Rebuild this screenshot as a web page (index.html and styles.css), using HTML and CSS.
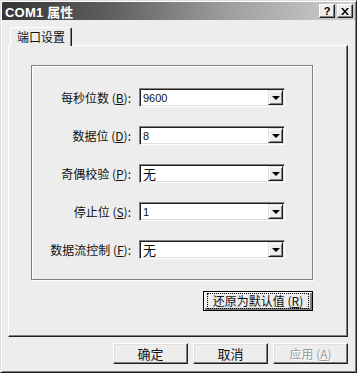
FILE: index.html
```html
<!DOCTYPE html>
<html lang="zh-CN">
<head>
  <meta charset="UTF-8" />
  <title>COM1 属性</title>
  <link rel="stylesheet" href="styles.css">
</head>
<body>

  <div class="window">
    <div class="titlebar">
      <span class="title">COM1 属性</span>
      <div class="caption-btns">
        <span class="cap-btn">?</span>
        <span class="cap-btn close">
          <svg width="8" height="7" viewBox="0 0 8 7"><path d="M0 0h2l2 2.5 2-2.5h2l-3 3.5 3 3.5h-2l-2-2.5-2 2.5h-2l3-3.5z" fill="#000"/></svg>
        </span>
      </div>
    </div>

    <div class="content">
      <div class="tabs">
        <div class="tab active">端口设置</div>
      </div>

      <div class="panel">
        <div class="group">
          <div class="row">
            <label>每秒位数 (<u>B</u>):</label>
            <div class="select"><span class="value">9600</span><span class="drop"></span></div>
          </div>
          <div class="row">
            <label>数据位 (<u>D</u>):</label>
            <div class="select"><span class="value">8</span><span class="drop"></span></div>
          </div>
          <div class="row">
            <label>奇偶校验 (<u>P</u>):</label>
            <div class="select"><span class="value cjk">无</span><span class="drop"></span></div>
          </div>
          <div class="row">
            <label>停止位 (<u>S</u>):</label>
            <div class="select"><span class="value">1</span><span class="drop"></span></div>
          </div>
          <div class="row">
            <label>数据流控制 (<u>F</u>):</label>
            <div class="select"><span class="value cjk">无</span><span class="drop"></span></div>
          </div>
        </div>

        <div class="panel-actions">
          <button class="btn default"><span class="focus">还原为默认值 (<u>R</u>)</span></button>
        </div>
      </div>

      <div class="footer">
        <button class="btn">确定</button>
        <button class="btn">取消</button>
        <button class="btn disabled">应用 (<u>A</u>)</button>
      </div>
    </div>
  </div>

</body>
</html>
```

FILE: styles.css
```css
:root {
  --face: #ededed;
  --light: #ffffff;
  --mid: #dfdfdf;
  --shadow: #808080;
  --dark: #202020;
}

body {
  margin: 0;
  background: var(--face);
  font-family: "Noto Sans CJK SC", "Liberation Sans", sans-serif;
  font-size: 12px;
  color: #111;
}

.window {
  width: 357px;
  height: 373px;
  box-sizing: border-box;
  padding: 1px;
  border: 1px solid;
  border-color: var(--mid) var(--dark) var(--dark) var(--mid);
  box-shadow: inset 1px 1px var(--light), inset -1px -1px var(--shadow);
  background: var(--face);
  display: flex;
  flex-direction: column;
}

.titlebar {
  height: 18px;
  display: flex;
  align-items: center;
  justify-content: space-between;
  padding: 0 2px 0 3px;
  background: linear-gradient(to right, #353535 0%, #5e5e5e 30%, #a0a0a0 65%, #cfcfcf 100%);
}

.title {
  color: #fff;
  font-family: "Liberation Sans", "Noto Sans CJK SC", sans-serif;
  font-weight: bold;
  font-size: 13px;
  letter-spacing: 0.2px;
}

.caption-btns {
  display: flex;
  gap: 2px;
}

.cap-btn {
  width: 14px;
  height: 12px;
  display: flex;
  align-items: center;
  justify-content: center;
  background: var(--face);
  border: 1px solid;
  border-color: var(--light) var(--dark) var(--dark) var(--light);
  box-shadow: inset -1px -1px var(--shadow);
  font-family: "Liberation Sans", sans-serif;
  font-weight: bold;
  font-size: 11px;
  line-height: 1;
  color: #000;
}

.content {
  flex: 1;
  padding: 0 7px 0 6px;
}

.tabs {
  display: flex;
  margin-top: 7px;
  padding-left: 2px;
}

.tab {
  position: relative;
  z-index: 1;
  width: 62px;
  height: 19px;
  margin-bottom: -1px;
  box-sizing: border-box;
  padding-top: 1px;
  border: 1px solid;
  border-bottom: none;
  border-color: var(--light) var(--dark) transparent var(--light);
  box-shadow: inset -1px 0 var(--shadow);
  border-radius: 2px 2px 0 0;
  background: var(--face);
  text-align: center;
  font-size: 12px;
  line-height: 16px;
}

.panel {
  box-sizing: border-box;
  height: 292px;
  padding: 19px 34px 25px 22px;
  border: 1px solid;
  border-color: var(--light) var(--dark) var(--dark) var(--light);
  box-shadow: inset -1px -1px var(--shadow);
}

.group {
  box-sizing: border-box;
  height: 215px;
  padding: 22px 0 20px 0;
  border: 1px solid var(--shadow);
  box-shadow: inset 1px 1px var(--light), 1px 1px var(--light);
  display: flex;
  flex-direction: column;
  gap: 19px;
}

.row {
  display: flex;
  align-items: center;
  height: 19px;
}

.row label {
  width: 99px;
  margin-right: 8px;
  text-align: right;
  font-size: 12px;
  white-space: nowrap;
}

u {
  text-decoration: underline;
  text-underline-offset: 1px;
}

.select {
  width: 146px;
  height: 19px;
  box-sizing: border-box;
  display: flex;
  align-items: center;
  justify-content: space-between;
  background: #fff;
  border: 1px solid;
  border-color: var(--shadow) var(--light) var(--light) var(--shadow);
  box-shadow: inset 1px 1px var(--dark), inset -1px -1px var(--mid);
}

.value {
  padding-left: 3px;
  font-family: "Liberation Sans", "Noto Sans CJK SC", sans-serif;
  font-size: 11px;
}

.value.cjk {
  font-size: 13px;
  font-family: "Noto Sans CJK SC", sans-serif;
}

.drop {
  width: 15px;
  height: 15px;
  margin-right: 1px;
  box-sizing: border-box;
  background: var(--face);
  border: 1px solid;
  border-color: var(--mid) var(--dark) var(--dark) var(--mid);
  box-shadow: inset 1px 1px var(--light), inset -1px -1px var(--shadow);
  display: flex;
  align-items: center;
  justify-content: center;
}

.drop::after {
  content: "";
  border-left: 4px solid transparent;
  border-right: 4px solid transparent;
  border-top: 4px solid #000;
  margin-top: 1px;
}

.panel-actions {
  display: flex;
  justify-content: flex-end;
  margin-top: 11px;
}

.btn {
  height: 21px;
  box-sizing: border-box;
  padding: 0;
  background: var(--face);
  border: 1px solid;
  border-color: var(--light) var(--dark) var(--dark) var(--light);
  box-shadow: inset -1px -1px var(--shadow), inset 1px 1px var(--mid);
  font-family: "Noto Sans CJK SC", sans-serif;
  font-size: 12px;
  color: #111;
}

.btn.default {
  width: 110px;
  height: 20px;
  border: 1px solid #000;
  box-shadow: inset 1px 1px var(--light), inset -2px -2px var(--shadow);
  display: flex;
  align-items: center;
  justify-content: center;
}

.focus {
  display: block;
  width: 102px;
  box-sizing: border-box;
  border: 1px dotted #000;
  line-height: 12px;
  padding: 1px 0;
  font-size: 12px;
  white-space: nowrap;
  text-align: center;
}

.footer {
  display: flex;
  justify-content: flex-end;
  gap: 5px;
  margin-top: 6px;
}

.footer .btn {
  width: 75px;
  font-size: 13px;
}

.btn.disabled {
  color: #9a9a9a;
  text-shadow: 1px 1px #fff;
  font-size: 12px;
}
```
